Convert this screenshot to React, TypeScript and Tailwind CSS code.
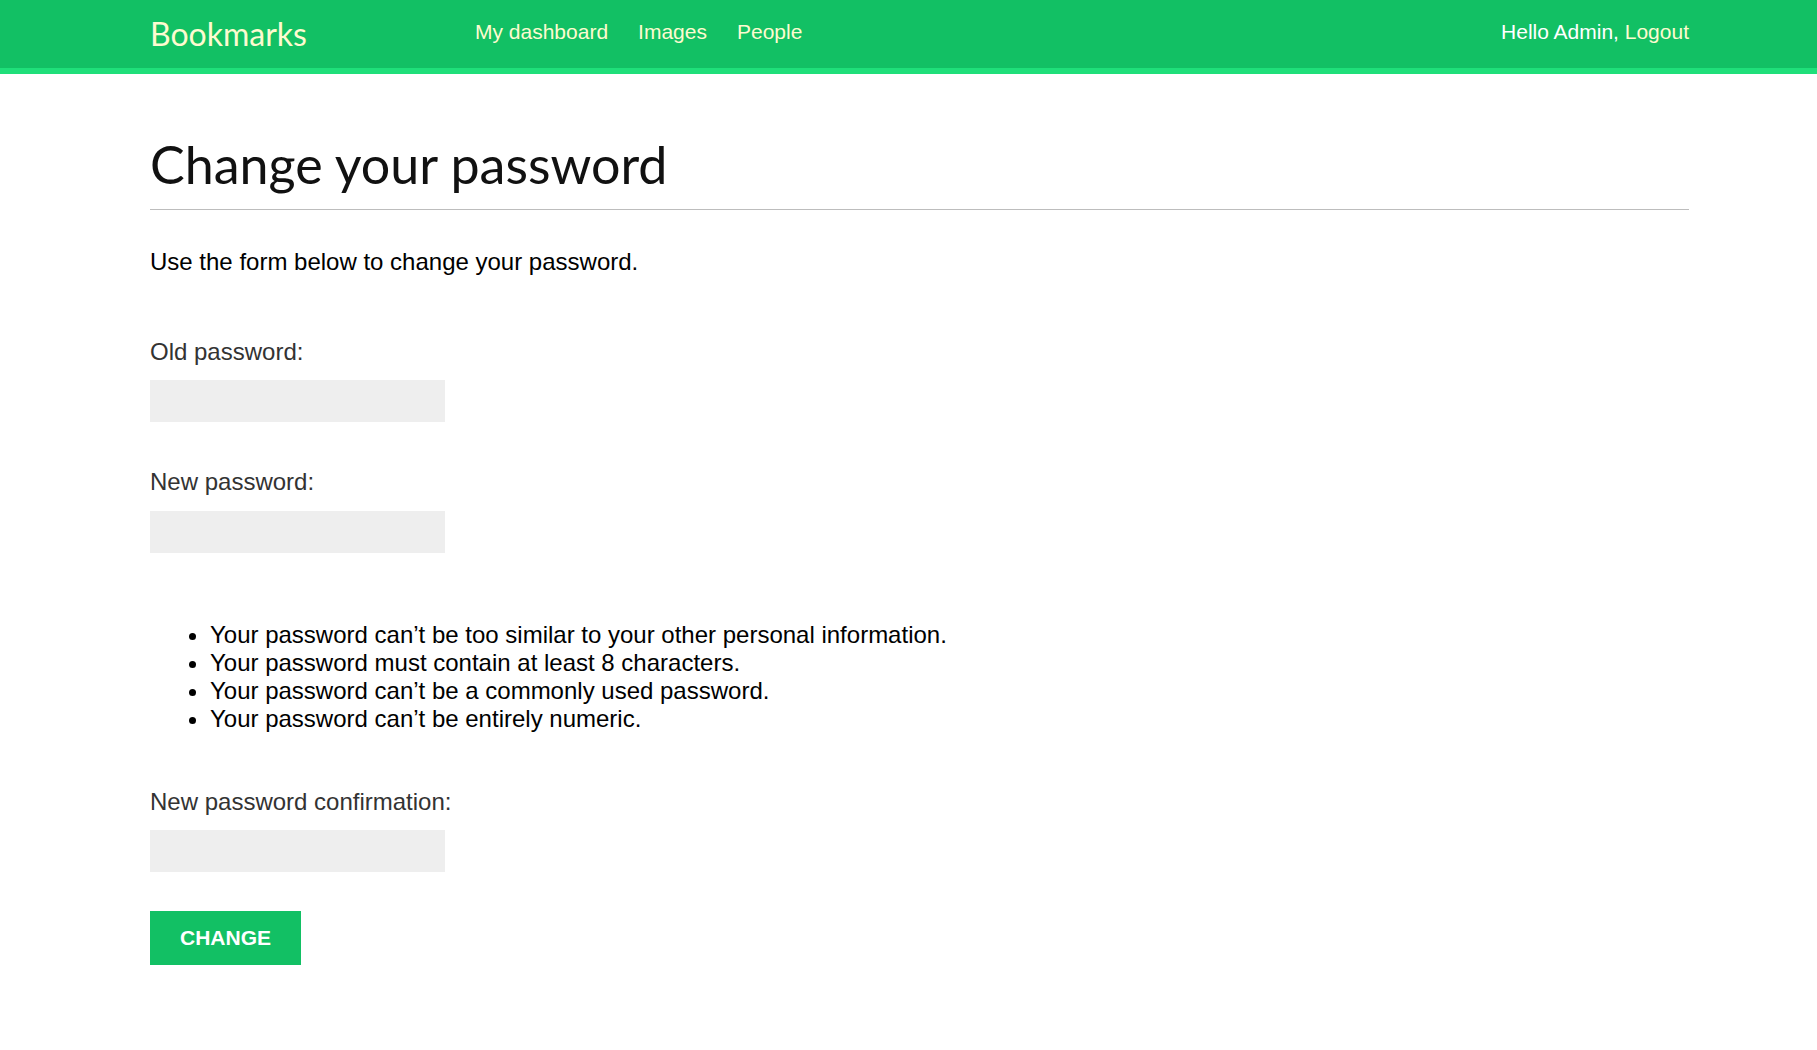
export default function App(): React.ReactElement {
  const arial = { fontFamily: '"Liberation Sans", Arial, sans-serif' };

  return (
    <div className="min-h-screen w-full bg-white leading-[1.15]" style={arial}>
      {/* Header */}
      <header className="h-[74px] w-full bg-[#12c064] border-b-[6px] border-[#1fdf7a] flex items-center pl-[150px] pr-[128px]">
        <div className="w-[325px] font-['Lato',sans-serif] text-[32px] leading-none text-[#fdfbd0]">
          Bookmarks
        </div>
        <nav className="flex gap-[30px] text-[21px] leading-[1.15] text-[#fdfbd0] -mt-[3px]">
          <a href="#">My dashboard</a>
          <a href="#">Images</a>
          <a href="#">People</a>
        </nav>
        <div className="ml-auto text-[21px] leading-[1.15] text-white -mt-[3px]">
          Hello Admin, <a href="#" className="text-[#fdfbd0]">Logout</a>
        </div>
      </header>

      {/* Content */}
      <main className="pl-[150px] pr-[128px]">
        <h1 className="mt-[60px] font-['Lato',sans-serif] text-[52px] leading-[60px] text-[#111]">
          Change your password
        </h1>
        <div className="mt-[15px] h-px bg-[#bdbdbd]" />

        <p className="mt-[38px] text-[24px] leading-[28px] text-black">
          Use the form below to change your password.
        </p>

        <form className="mt-[62px]">
          <label className="block text-[24px] leading-[28px] text-[#333]">Old password:</label>
          <input
            type="password"
            className="mt-[14px] block w-[295px] h-[42px] bg-[#eeeeee] outline-none"
          />

          <label className="mt-[46px] block text-[24px] leading-[28px] text-[#333]">
            New password:
          </label>
          <input
            type="password"
            className="mt-[15px] block w-[295px] h-[42px] bg-[#eeeeee] outline-none"
          />

          <ul className="mt-[68px] list-disc pl-[60px] text-[24px] leading-[28px] text-black">
            <li>Your password can’t be too similar to your other personal information.</li>
            <li>Your password must contain at least 8 characters.</li>
            <li>Your password can’t be a commonly used password.</li>
            <li>Your password can’t be entirely numeric.</li>
          </ul>

          <label className="mt-[55px] block text-[24px] leading-[28px] text-[#333]">
            New password confirmation:
          </label>
          <input
            type="password"
            className="mt-[14px] block w-[295px] h-[42px] bg-[#eeeeee] outline-none"
          />

          <button
            type="button"
            className="mt-[39px] block w-[151px] h-[54px] bg-[#12c064] text-white font-bold text-[21px] uppercase"
          >
            Change
          </button>
        </form>
      </main>
    </div>
  );
}
